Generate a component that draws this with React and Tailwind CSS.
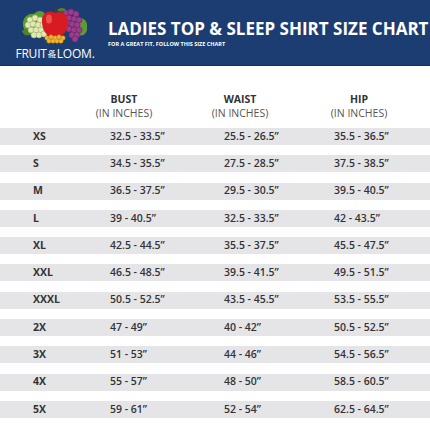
import React from 'react'

const rows = [
  ['XS', '32.5 - 33.5”', '25.5 - 26.5”', '35.5 - 36.5”'],
  ['S', '34.5 - 35.5”', '27.5 - 28.5”', '37.5 - 38.5”'],
  ['M', '36.5 - 37.5”', '29.5 - 30.5”', '39.5 - 40.5”'],
  ['L', '39 - 40.5”', '32.5 - 33.5”', '42 - 43.5”'],
  ['XL', '42.5 - 44.5”', '35.5 - 37.5”', '45.5 - 47.5”'],
  ['XXL', '46.5 - 48.5”', '39.5 - 41.5”', '49.5 - 51.5”'],
  ['XXXL', '50.5 - 52.5”', '43.5 - 45.5”', '53.5 - 55.5”'],
  ['2X', '47 - 49”', '40 - 42”', '50.5 - 52.5”'],
  ['3X', '51 - 53”', '44 - 46”', '54.5 - 56.5”'],
  ['4X', '55 - 57”', '48 - 50”', '58.5 - 60.5”'],
  ['5X', '59 - 61”', '52 - 54”', '62.5 - 64.5”'],
]

const Fruit = () => (
  <svg width="66" height="38" viewBox="0 0 66 38">
    {/* left leaves */}
    <path d="M1 20 C0 12 6 7 12 8 C15 4 21 4 23 8 L20 30 C12 33 3 28 1 20Z" fill="#5d9a36" />
    <path d="M0 25 C4 21 8 23 10 27 C6 31 2 30 0 25Z" fill="#4a862c" />
    {/* right leaves */}
    <path d="M55 12 C61 11 66 15 65 21 C66 27 61 31 57 29Z" fill="#5d9a36" />
    {/* white grapes */}
    {[[8, 14], [13, 12], [18, 14], [6, 19], [11, 18], [16, 19], [21, 19], [9, 24], [14, 24], [19, 24], [12, 29], [17, 29], [22, 28]].map(([x, y], i) => (
      <circle key={i} cx={x} cy={y} r="3" fill="#e2e8b4" stroke="#9cb066" strokeWidth="0.6" />
    ))}
    {/* purple grapes */}
    {[[44, 7], [49, 6], [54, 8], [42, 12], [47, 12], [52, 13], [57, 14], [45, 17], [50, 18], [55, 19], [47, 23], [52, 24], [57, 24], [50, 29], [55, 29], [53, 33]].map(([x, y], i) => (
      <circle key={i} cx={x} cy={y} r="3.1" fill="#9b3d8e" stroke="#6a2364" strokeWidth="0.6" />
    ))}
    {/* apple */}
    <path d="M33 7 C27 3 19 7 20 17 C21 27 27 32 33 30 C39 32 46 26 46 17 C46 7 39 4 33 7Z" fill="#d81b23" />
    <ellipse cx="27" cy="13" rx="3" ry="4.5" fill="#f36a6a" opacity="0.7" />
    <path d="M33 7 C33 4 34 2 36 1" stroke="#5a3a1a" strokeWidth="1.2" fill="none" />
    <path d="M35 4 C39 1 43 2 44 4 C40 6 37 6 35 4Z" fill="#4a862c" />
    {/* currants */}
    {[[25, 32], [29, 31], [33, 32], [37, 31], [41, 32], [27, 35], [31, 35], [35, 35], [39, 35]].map(([x, y], i) => (
      <circle key={i} cx={x} cy={y} r="2.2" fill="#f2b632" stroke="#c98414" strokeWidth="0.5" />
    ))}
  </svg>
)

const App = () => {
  return (
    <div className="w-[430px] h-[430px] bg-white overflow-hidden" style={{ fontFamily: '"Open Sans", "Liberation Sans", sans-serif' }}>
      <div className="h-[66px] bg-[#1c3d72] border-b border-[#15315e] flex">
        <div className="w-[100px] shrink-0 flex flex-col items-center pt-[6px] pl-[10px]">
          <Fruit />
          <div className="flex items-center text-white text-[12px] leading-none mt-[4px] tracking-[-0.2px]">
            <span>FRUIT</span>
            <span className="flex flex-col text-[4.5px] leading-[4.5px] font-bold mx-[1px] text-center">
              <span>OF</span>
              <span>THE</span>
            </span>
            <span>LOOM.</span>
          </div>
        </div>
        <div className="pl-[8px] pt-[19px]">
          <div className="text-white font-bold text-[17px] leading-[20px] whitespace-nowrap">LADIES TOP &amp; SLEEP SHIRT SIZE CHART</div>
          <div className="text-white font-bold text-[5.5px] leading-[6px] mt-[2px] whitespace-nowrap">FOR A GREAT FIT, FOLLOW THIS SIZE CHART</div>
        </div>
      </div>

      <div className="flex pt-[26px] text-[10.5px] leading-[14px] text-[#333]">
        <div className="w-[100px] ml-[74px] text-center">
          <div className="font-bold">BUST</div>
          <div className="text-[#555]">(IN INCHES)</div>
        </div>
        <div className="w-[100px] ml-[16px] text-center">
          <div className="font-bold">WAIST</div>
          <div className="text-[#555]">(IN INCHES)</div>
        </div>
        <div className="w-[100px] ml-[19px] text-center">
          <div className="font-bold">HIP</div>
          <div className="text-[#555]">(IN INCHES)</div>
        </div>
      </div>

      <div className="flex flex-col gap-[10.3px] mt-[8px]">
        {rows.map(([size, bust, waist, hip]) => (
          <div key={size} className="h-[17px] bg-[#e5e5e8] grid grid-cols-[110px_114px_110px_1fr] items-center text-[10.5px] font-semibold text-[#333]">
            <div className="pl-[33px] font-bold">{size}</div>
            <div>{bust}</div>
            <div>{waist}</div>
            <div>{hip}</div>
          </div>
        ))}
      </div>
    </div>
  )
}

export default App
